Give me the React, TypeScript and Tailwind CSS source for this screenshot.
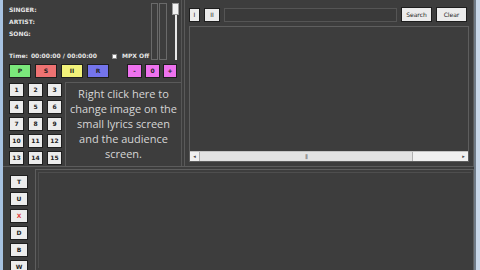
import React from 'react';

const numbers = [1, 2, 3, 4, 5, 6, 7, 8, 9, 10, 11, 12, 13, 14, 15];

const colorButtons = [
  { label: 'P', cls: 'w-[22px] bg-[#7be87b]' },
  { label: 'S', cls: 'w-[22px] bg-[#ee7272]' },
  { label: 'II', cls: 'w-[22px] bg-[#f2f27a]' },
  { label: 'R', cls: 'w-[22px] bg-[#7474ec]' },
];

const pinkButtons = [
  { label: '-', cls: 'w-[15px]' },
  { label: '0', cls: 'w-[15px]' },
  { label: '+', cls: 'w-[14px]' },
];

const sideButtons = [
  { label: 'T', red: false },
  { label: 'U', red: false },
  { label: 'X', red: true },
  { label: 'D', red: false },
  { label: 'B', red: false },
  { label: 'W', red: false },
];

function SmallButton({ children, className = '' }: { children: React.ReactNode; className?: string }) {
  return (
    <div
      className={
        'flex items-center justify-center border border-[#1e1e1e] text-[6px] font-bold text-[#222] leading-none ' +
        className
      }
    >
      {children}
    </div>
  );
}

export default function App() {
  return (
    <div
      className="flex w-[480px] h-[270px] overflow-hidden bg-[#3d3d3d]"
      style={{ fontFamily: '"DejaVu Sans", sans-serif' }}
    >
      {/* window edge */}
      <div className="w-[3px] h-full shrink-0 bg-[#a8c3e2]" />

      <div className="flex flex-col flex-1 min-w-0">
        {/* top row */}
        <div className="flex h-[167px] shrink-0 border-b border-[#5c5c5c]">
          {/* left control panel */}
          <div className="flex flex-col w-[179px] shrink-0 border-r border-[#575757]">
            <div className="flex h-[62px] shrink-0">
              <div className="flex flex-col flex-1 pl-[6px] pt-[3px] text-[6px] font-bold text-[#e6e6e6] leading-none whitespace-nowrap">
                <div className="h-[13px] flex items-center">SINGER:</div>
                <div className="h-[12px] flex items-center">ARTIST:</div>
                <div className="h-[12px] flex items-center">SONG:</div>
                <div className="flex items-center mt-[13px] gap-[3px]">
                  <span>Time:</span>
                  <span>00:00:00 / 00:00:00</span>
                  <span className="ml-[12px] w-[5px] h-[5px] bg-white border border-[#888]" />
                  <span className="ml-[2px]">MPX Off</span>
                </div>
              </div>
              {/* slider area */}
              <div className="flex w-[30px] shrink-0 pt-[3px] pb-[2px] gap-[1px]">
                <div className="w-[7px] h-full border border-[#6a6a6a]" />
                <div className="w-[8px] h-full border border-[#6a6a6a]" />
                <div className="flex flex-col items-center w-[9px] ml-[3px]">
                  <div className="w-[7px] h-[12px] bg-[#f2f2f2] border border-[#999]" />
                  <div className="w-[2px] flex-1 bg-[#e8e8e8]" />
                </div>
              </div>
            </div>

            {/* colour buttons */}
            <div className="flex items-center h-[16px] shrink-0 pl-[6px] mt-[1px]">
              <div className="flex gap-[4px]">
                {colorButtons.map((b) => (
                  <SmallButton key={b.label} className={'h-[14px] ' + b.cls}>
                    {b.label}
                  </SmallButton>
                ))}
              </div>
              <div className="flex gap-[3px] ml-[18px]">
                {pinkButtons.map((b) => (
                  <SmallButton key={b.label} className={'h-[14px] bg-[#ee72ee] ' + b.cls}>
                    {b.label}
                  </SmallButton>
                ))}
              </div>
            </div>

            {/* number grid and text panel */}
            <div className="flex flex-1 min-h-0 mt-[3px]">
              <div className="grid grid-cols-3 gap-x-[3px] gap-y-[3px] pl-[6px] pt-[1px] content-start w-[60px] shrink-0">
                {numbers.map((n) => (
                  <SmallButton key={n} className="w-[15px] h-[14px] bg-[#ececec]">
                    {n}
                  </SmallButton>
                ))}
              </div>
              <div
                className="flex-1 min-w-0 overflow-hidden flex items-center justify-center border-l border-t border-[#5a5a5a] ml-[2px] text-center text-[11px] leading-[15px] text-[#d6d6d6] pb-[2px] whitespace-nowrap"
                style={{ fontFamily: '"Open Sans", Lato, sans-serif' }}
              >
                <div>
                  Right click here to
                  <br />
                  change image on the
                  <br />
                  small lyrics screen
                  <br />
                  and the audience
                  <br />
                  screen.
                </div>
              </div>
            </div>
          </div>

          {/* right song list panel */}
          <div className="flex flex-col flex-1 min-w-0 ml-[2px] border-l border-r border-[#5a5a5a] px-[4px]">
            <div className="flex items-center h-[26px] shrink-0 gap-[4px] pt-[3px]">
              <SmallButton className="w-[11px] h-[14px] bg-[#ececec] font-normal">I</SmallButton>
              <SmallButton className="w-[16px] h-[14px] bg-[#ececec] font-normal">II</SmallButton>
              <div className="flex-1 h-[14px] bg-[#3a3a3a] border border-[#555]" />
              <SmallButton className="w-[31px] h-[15px] bg-[#ececec] font-normal text-[6.5px]">Search</SmallButton>
              <SmallButton className="w-[31px] h-[15px] bg-[#ececec] font-normal text-[6.5px] mr-[2px]">Clear</SmallButton>
            </div>
            <div className="flex flex-col flex-1 border border-[#5e5e5e] mb-[4px]">
              <div className="flex-1" />
              <div className="flex items-center h-[10px] bg-[#f0f0f0] border-t border-[#c4c4c4]">
                <span className="w-[9px] text-[5px] text-[#444] text-center">◂</span>
                <div className="flex-1 h-full flex items-center bg-[#e2e2e2] border-l border-r border-[#b0b0b0]">
                  <div className="flex-1" />
                  <span className="text-[5px] text-[#555] tracking-[-1px]">|||</span>
                  <div className="flex-1" />
                </div>
                <div className="w-[46px]" />
                <span className="w-[9px] text-[5px] text-[#444] text-center">▸</span>
              </div>
            </div>
          </div>
        </div>

        {/* bottom row */}
        <div className="flex flex-1 min-h-0">
          <div className="flex flex-col gap-[3px] w-[32px] shrink-0 pl-[7px] pt-[8px]">
            {sideButtons.map((b) => (
              <SmallButton
                key={b.label}
                className={'w-[18px] h-[14px] shrink-0 bg-[#ececec] ' + (b.red ? 'text-[#e04040]' : '')}
              >
                {b.label}
              </SmallButton>
            ))}
          </div>
          <div className="flex-1 border-l border-t border-r border-[#5e5e5e] mt-[2px] p-[2px]">
            <div className="w-full h-full border-l border-t border-[#4e4e4e]" />
          </div>
        </div>
      </div>

      {/* right window edge */}
      <div className="flex w-[6px] h-full shrink-0">
        <div className="w-[2px] h-full bg-[#6f7a86]" />
        <div className="flex-1 h-full bg-[#c9d7e8]" />
      </div>
    </div>
  );
}
